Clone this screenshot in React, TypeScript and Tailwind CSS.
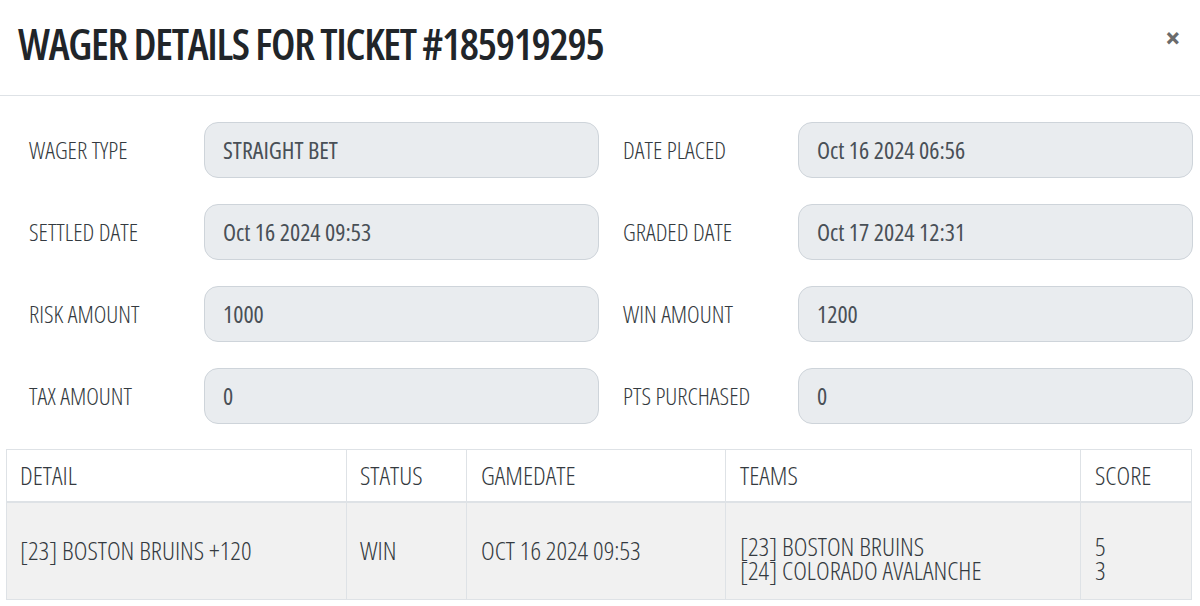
const fields = [
  ["WAGER TYPE", "STRAIGHT BET", "DATE PLACED", "Oct 16 2024 06:56"],
  ["SETTLED DATE", "Oct 16 2024 09:53", "GRADED DATE", "Oct 17 2024 12:31"],
  ["RISK AMOUNT", "1000", "WIN AMOUNT", "1200"],
  ["TAX AMOUNT", "0", "PTS PURCHASED", "0"],
];

function Field({ label, value }: { label: string; value: string }) {
  return (
    <div className="flex items-center">
      <div className="w-[199px] pl-[24px] text-[24px] font-light text-[#343a40]">{label}</div>
      <div className="flex h-[56px] flex-1 items-center rounded-[14px] border border-[#ced4da] bg-[#e9ecef] px-[18px] text-[24px] text-[#495057]">
        {value}
      </div>
    </div>
  );
}

export default function App() {
  return (
    <div className="h-[606px] w-[1200px] overflow-hidden bg-white font-['Open_Sans',sans-serif] font-stretch-75%">
      <div className="flex h-[96px] items-center justify-between border-b border-[#dee2e6] pb-[6px] pl-[18px] pr-[20px]">
        <h1 className="text-[43px] font-semibold tracking-[-0.03em] text-[#212529]">WAGER DETAILS FOR TICKET #185919295</h1>
        <button className="mb-[14px] text-[30px] font-bold leading-none text-[#6b6b6b]">×</button>
      </div>

      <div className="flex flex-col gap-[26px] px-[5px] pt-[26px]">
        {fields.map(([l1, v1, l2, v2]) => (
          <div key={l1} className="grid grid-cols-2 pr-[2px]">
            <Field label={l1} value={v1} />
            <Field label={l2} value={v2} />
          </div>
        ))}
      </div>

      <table className="ml-[6px] mt-[25px] w-[1186px] border-collapse text-left text-[26px] font-light text-[#343a40]">
        <thead>
          <tr className="h-[52px] border-b-2 border-[#dee2e6]">
            <th className="w-[340px] border border-[#dee2e6] px-[13px] font-light">DETAIL</th>
            <th className="w-[120px] border border-[#dee2e6] px-[13px] font-light">STATUS</th>
            <th className="w-[259px] border border-[#dee2e6] px-[14px] font-light">GAMEDATE</th>
            <th className="w-[355px] border border-[#dee2e6] px-[14px] font-light">TEAMS</th>
            <th className="border border-[#dee2e6] px-[14px] font-light">SCORE</th>
          </tr>
        </thead>
        <tbody>
          <tr className="h-[98px] bg-[#f1f1f1]">
            <td className="border border-[#dee2e6] px-[13px]">[23] BOSTON BRUINS +120</td>
            <td className="border border-[#dee2e6] px-[13px]">WIN</td>
            <td className="border border-[#dee2e6] px-[14px]">OCT 16 2024 09:53</td>
            <td className="border border-[#dee2e6] px-[14px] pt-[14px] leading-[24px]">
              <div>[23] BOSTON BRUINS</div>
              <div>[24] COLORADO AVALANCHE</div>
            </td>
            <td className="border border-[#dee2e6] px-[14px] pt-[14px] leading-[24px]">
              <div>5</div>
              <div>3</div>
            </td>
          </tr>
        </tbody>
      </table>
    </div>
  );
}
